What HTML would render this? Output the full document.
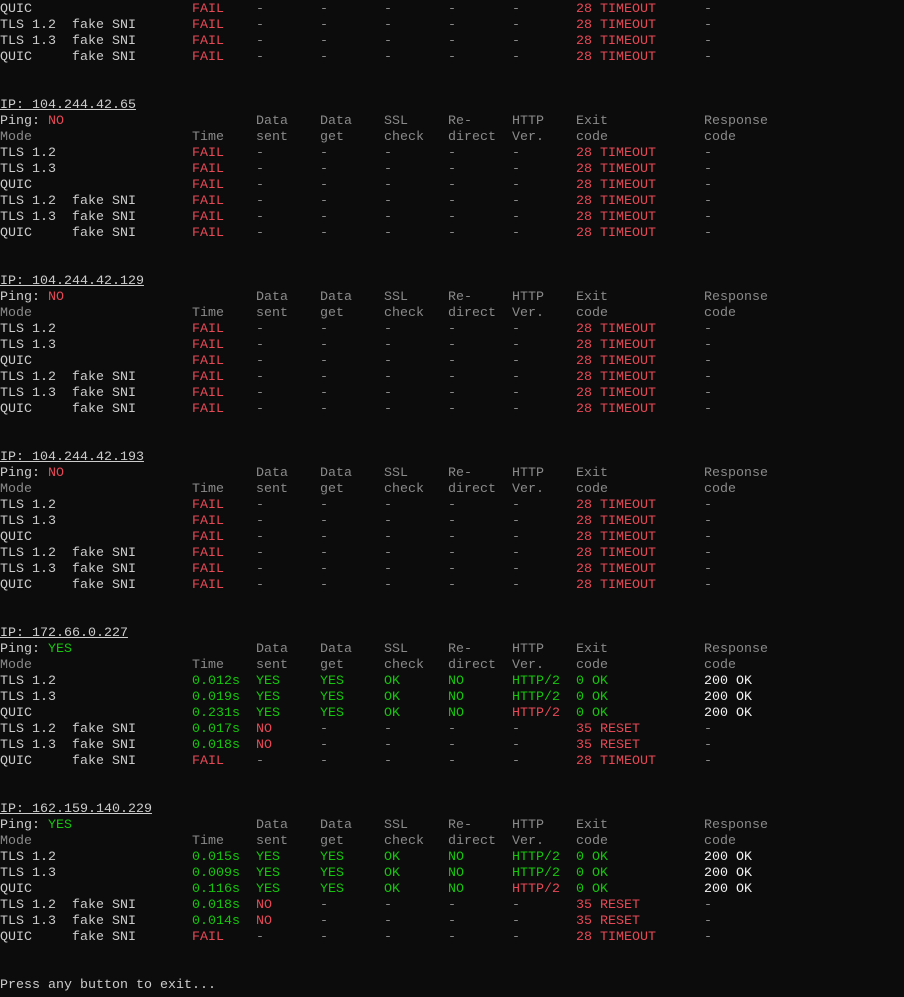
<!DOCTYPE html>
<html><head><meta charset="utf-8"><style>
html,body{margin:0;padding:0;background:#0c0c0c;width:904px;height:997px;overflow:hidden}
body{font-family:"Liberation Mono",monospace;font-size:13.33px;color:#cccccc;padding-top:2px;box-sizing:border-box}
div{height:16px;line-height:16px;white-space:pre}
span{display:inline-block;white-space:pre}
.a{width:192px}.b{width:64px}.e{width:128px}.p{width:256px}
.r{color:#e74856}.g{color:#16c60c}.h{color:#8a8a8a}.w{color:#f2f2f2}
u{text-decoration:underline}
</style></head><body>
<div><span class=a>QUIC</span><span class="b r">FAIL</span><span class="b h">-</span><span class="b h">-</span><span class="b h">-</span><span class="b h">-</span><span class="b h">-</span><span class="e r">28 TIMEOUT</span><span class=h>-</span></div>
<div><span class=a>TLS 1.2  fake SNI</span><span class="b r">FAIL</span><span class="b h">-</span><span class="b h">-</span><span class="b h">-</span><span class="b h">-</span><span class="b h">-</span><span class="e r">28 TIMEOUT</span><span class=h>-</span></div>
<div><span class=a>TLS 1.3  fake SNI</span><span class="b r">FAIL</span><span class="b h">-</span><span class="b h">-</span><span class="b h">-</span><span class="b h">-</span><span class="b h">-</span><span class="e r">28 TIMEOUT</span><span class=h>-</span></div>
<div><span class=a>QUIC     fake SNI</span><span class="b r">FAIL</span><span class="b h">-</span><span class="b h">-</span><span class="b h">-</span><span class="b h">-</span><span class="b h">-</span><span class="e r">28 TIMEOUT</span><span class=h>-</span></div>
<div></div><div></div>

<div><u>IP: 104.244.42.65</u></div>
<div><span class=p>Ping: <span class=r>NO</span></span><span class="b h">Data</span><span class="b h">Data</span><span class="b h">SSL</span><span class="b h">Re-</span><span class="b h">HTTP</span><span class="e h">Exit</span><span class=h>Response</span></div>
<div><span class="a h">Mode</span><span class="b h">Time</span><span class="b h">sent</span><span class="b h">get</span><span class="b h">check</span><span class="b h">direct</span><span class="b h">Ver.</span><span class="e h">code</span><span class=h>code</span></div>
<div><span class=a>TLS 1.2</span><span class="b r">FAIL</span><span class="b h">-</span><span class="b h">-</span><span class="b h">-</span><span class="b h">-</span><span class="b h">-</span><span class="e r">28 TIMEOUT</span><span class=h>-</span></div>
<div><span class=a>TLS 1.3</span><span class="b r">FAIL</span><span class="b h">-</span><span class="b h">-</span><span class="b h">-</span><span class="b h">-</span><span class="b h">-</span><span class="e r">28 TIMEOUT</span><span class=h>-</span></div>
<div><span class=a>QUIC</span><span class="b r">FAIL</span><span class="b h">-</span><span class="b h">-</span><span class="b h">-</span><span class="b h">-</span><span class="b h">-</span><span class="e r">28 TIMEOUT</span><span class=h>-</span></div>
<div><span class=a>TLS 1.2  fake SNI</span><span class="b r">FAIL</span><span class="b h">-</span><span class="b h">-</span><span class="b h">-</span><span class="b h">-</span><span class="b h">-</span><span class="e r">28 TIMEOUT</span><span class=h>-</span></div>
<div><span class=a>TLS 1.3  fake SNI</span><span class="b r">FAIL</span><span class="b h">-</span><span class="b h">-</span><span class="b h">-</span><span class="b h">-</span><span class="b h">-</span><span class="e r">28 TIMEOUT</span><span class=h>-</span></div>
<div><span class=a>QUIC     fake SNI</span><span class="b r">FAIL</span><span class="b h">-</span><span class="b h">-</span><span class="b h">-</span><span class="b h">-</span><span class="b h">-</span><span class="e r">28 TIMEOUT</span><span class=h>-</span></div>
<div></div><div></div>

<div><u>IP: 104.244.42.129</u></div>
<div><span class=p>Ping: <span class=r>NO</span></span><span class="b h">Data</span><span class="b h">Data</span><span class="b h">SSL</span><span class="b h">Re-</span><span class="b h">HTTP</span><span class="e h">Exit</span><span class=h>Response</span></div>
<div><span class="a h">Mode</span><span class="b h">Time</span><span class="b h">sent</span><span class="b h">get</span><span class="b h">check</span><span class="b h">direct</span><span class="b h">Ver.</span><span class="e h">code</span><span class=h>code</span></div>
<div><span class=a>TLS 1.2</span><span class="b r">FAIL</span><span class="b h">-</span><span class="b h">-</span><span class="b h">-</span><span class="b h">-</span><span class="b h">-</span><span class="e r">28 TIMEOUT</span><span class=h>-</span></div>
<div><span class=a>TLS 1.3</span><span class="b r">FAIL</span><span class="b h">-</span><span class="b h">-</span><span class="b h">-</span><span class="b h">-</span><span class="b h">-</span><span class="e r">28 TIMEOUT</span><span class=h>-</span></div>
<div><span class=a>QUIC</span><span class="b r">FAIL</span><span class="b h">-</span><span class="b h">-</span><span class="b h">-</span><span class="b h">-</span><span class="b h">-</span><span class="e r">28 TIMEOUT</span><span class=h>-</span></div>
<div><span class=a>TLS 1.2  fake SNI</span><span class="b r">FAIL</span><span class="b h">-</span><span class="b h">-</span><span class="b h">-</span><span class="b h">-</span><span class="b h">-</span><span class="e r">28 TIMEOUT</span><span class=h>-</span></div>
<div><span class=a>TLS 1.3  fake SNI</span><span class="b r">FAIL</span><span class="b h">-</span><span class="b h">-</span><span class="b h">-</span><span class="b h">-</span><span class="b h">-</span><span class="e r">28 TIMEOUT</span><span class=h>-</span></div>
<div><span class=a>QUIC     fake SNI</span><span class="b r">FAIL</span><span class="b h">-</span><span class="b h">-</span><span class="b h">-</span><span class="b h">-</span><span class="b h">-</span><span class="e r">28 TIMEOUT</span><span class=h>-</span></div>
<div></div><div></div>

<div><u>IP: 104.244.42.193</u></div>
<div><span class=p>Ping: <span class=r>NO</span></span><span class="b h">Data</span><span class="b h">Data</span><span class="b h">SSL</span><span class="b h">Re-</span><span class="b h">HTTP</span><span class="e h">Exit</span><span class=h>Response</span></div>
<div><span class="a h">Mode</span><span class="b h">Time</span><span class="b h">sent</span><span class="b h">get</span><span class="b h">check</span><span class="b h">direct</span><span class="b h">Ver.</span><span class="e h">code</span><span class=h>code</span></div>
<div><span class=a>TLS 1.2</span><span class="b r">FAIL</span><span class="b h">-</span><span class="b h">-</span><span class="b h">-</span><span class="b h">-</span><span class="b h">-</span><span class="e r">28 TIMEOUT</span><span class=h>-</span></div>
<div><span class=a>TLS 1.3</span><span class="b r">FAIL</span><span class="b h">-</span><span class="b h">-</span><span class="b h">-</span><span class="b h">-</span><span class="b h">-</span><span class="e r">28 TIMEOUT</span><span class=h>-</span></div>
<div><span class=a>QUIC</span><span class="b r">FAIL</span><span class="b h">-</span><span class="b h">-</span><span class="b h">-</span><span class="b h">-</span><span class="b h">-</span><span class="e r">28 TIMEOUT</span><span class=h>-</span></div>
<div><span class=a>TLS 1.2  fake SNI</span><span class="b r">FAIL</span><span class="b h">-</span><span class="b h">-</span><span class="b h">-</span><span class="b h">-</span><span class="b h">-</span><span class="e r">28 TIMEOUT</span><span class=h>-</span></div>
<div><span class=a>TLS 1.3  fake SNI</span><span class="b r">FAIL</span><span class="b h">-</span><span class="b h">-</span><span class="b h">-</span><span class="b h">-</span><span class="b h">-</span><span class="e r">28 TIMEOUT</span><span class=h>-</span></div>
<div><span class=a>QUIC     fake SNI</span><span class="b r">FAIL</span><span class="b h">-</span><span class="b h">-</span><span class="b h">-</span><span class="b h">-</span><span class="b h">-</span><span class="e r">28 TIMEOUT</span><span class=h>-</span></div>
<div></div><div></div>

<div><u>IP: 172.66.0.227</u></div>
<div><span class=p>Ping: <span class=g>YES</span></span><span class="b h">Data</span><span class="b h">Data</span><span class="b h">SSL</span><span class="b h">Re-</span><span class="b h">HTTP</span><span class="e h">Exit</span><span class=h>Response</span></div>
<div><span class="a h">Mode</span><span class="b h">Time</span><span class="b h">sent</span><span class="b h">get</span><span class="b h">check</span><span class="b h">direct</span><span class="b h">Ver.</span><span class="e h">code</span><span class=h>code</span></div>
<div><span class=a>TLS 1.2</span><span class="b g">0.012s</span><span class="b g">YES</span><span class="b g">YES</span><span class="b g">OK</span><span class="b g">NO</span><span class="b g">HTTP/2</span><span class="e g">0 OK</span><span class=w>200 OK</span></div>
<div><span class=a>TLS 1.3</span><span class="b g">0.019s</span><span class="b g">YES</span><span class="b g">YES</span><span class="b g">OK</span><span class="b g">NO</span><span class="b g">HTTP/2</span><span class="e g">0 OK</span><span class=w>200 OK</span></div>
<div><span class=a>QUIC</span><span class="b g">0.231s</span><span class="b g">YES</span><span class="b g">YES</span><span class="b g">OK</span><span class="b g">NO</span><span class="b r">HTTP/2</span><span class="e g">0 OK</span><span class=w>200 OK</span></div>
<div><span class=a>TLS 1.2  fake SNI</span><span class="b g">0.017s</span><span class="b r">NO</span><span class="b h">-</span><span class="b h">-</span><span class="b h">-</span><span class="b h">-</span><span class="e r">35 RESET</span><span class=h>-</span></div>
<div><span class=a>TLS 1.3  fake SNI</span><span class="b g">0.018s</span><span class="b r">NO</span><span class="b h">-</span><span class="b h">-</span><span class="b h">-</span><span class="b h">-</span><span class="e r">35 RESET</span><span class=h>-</span></div>
<div><span class=a>QUIC     fake SNI</span><span class="b r">FAIL</span><span class="b h">-</span><span class="b h">-</span><span class="b h">-</span><span class="b h">-</span><span class="b h">-</span><span class="e r">28 TIMEOUT</span><span class=h>-</span></div>
<div></div><div></div>

<div><u>IP: 162.159.140.229</u></div>
<div><span class=p>Ping: <span class=g>YES</span></span><span class="b h">Data</span><span class="b h">Data</span><span class="b h">SSL</span><span class="b h">Re-</span><span class="b h">HTTP</span><span class="e h">Exit</span><span class=h>Response</span></div>
<div><span class="a h">Mode</span><span class="b h">Time</span><span class="b h">sent</span><span class="b h">get</span><span class="b h">check</span><span class="b h">direct</span><span class="b h">Ver.</span><span class="e h">code</span><span class=h>code</span></div>
<div><span class=a>TLS 1.2</span><span class="b g">0.015s</span><span class="b g">YES</span><span class="b g">YES</span><span class="b g">OK</span><span class="b g">NO</span><span class="b g">HTTP/2</span><span class="e g">0 OK</span><span class=w>200 OK</span></div>
<div><span class=a>TLS 1.3</span><span class="b g">0.009s</span><span class="b g">YES</span><span class="b g">YES</span><span class="b g">OK</span><span class="b g">NO</span><span class="b g">HTTP/2</span><span class="e g">0 OK</span><span class=w>200 OK</span></div>
<div><span class=a>QUIC</span><span class="b g">0.116s</span><span class="b g">YES</span><span class="b g">YES</span><span class="b g">OK</span><span class="b g">NO</span><span class="b r">HTTP/2</span><span class="e g">0 OK</span><span class=w>200 OK</span></div>
<div><span class=a>TLS 1.2  fake SNI</span><span class="b g">0.018s</span><span class="b r">NO</span><span class="b h">-</span><span class="b h">-</span><span class="b h">-</span><span class="b h">-</span><span class="e r">35 RESET</span><span class=h>-</span></div>
<div><span class=a>TLS 1.3  fake SNI</span><span class="b g">0.014s</span><span class="b r">NO</span><span class="b h">-</span><span class="b h">-</span><span class="b h">-</span><span class="b h">-</span><span class="e r">35 RESET</span><span class=h>-</span></div>
<div><span class=a>QUIC     fake SNI</span><span class="b r">FAIL</span><span class="b h">-</span><span class="b h">-</span><span class="b h">-</span><span class="b h">-</span><span class="b h">-</span><span class="e r">28 TIMEOUT</span><span class=h>-</span></div>
<div></div><div></div>
<div>Press any button to exit...</div>
</body></html>
